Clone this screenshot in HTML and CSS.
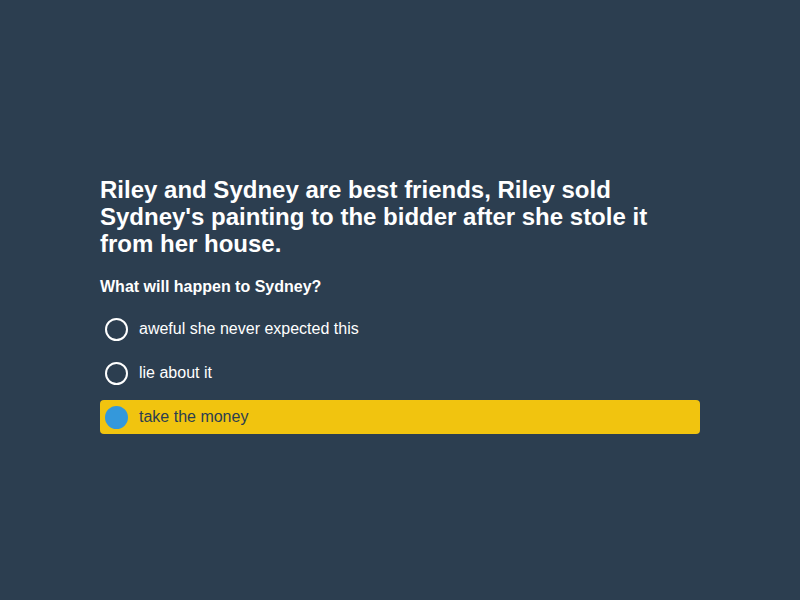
FILE: index.html
```html
<!DOCTYPE html>
<html lang="en">
<head>
<meta charset="utf-8">
<title>Quiz</title>
<link rel="stylesheet" href="styles.css">
</head>
<body>
<main class="page">
  <section class="quiz">
    <h1 class="question">Riley and Sydney are best friends, Riley sold Sydney's painting to the bidder after she stole it from her house.</h1>
    <h2 class="prompt">What will happen to Sydney?</h2>
    <ul class="options">
      <li class="option"><span class="radio"></span><span class="label">aweful she never expected this</span></li>
      <li class="option"><span class="radio"></span><span class="label">lie about it</span></li>
      <li class="option selected"><span class="radio"></span><span class="label">take the money</span></li>
    </ul>
  </section>
</main>
</body>
</html>
```
FILE: styles.css
```css
html, body {
  margin: 0;
  padding: 0;
  height: 100%;
}
body {
  background: #2c3e50;
  color: #ffffff;
  font-family: "Liberation Sans", Arial, sans-serif;
}
.page {
  height: 100%;
  box-sizing: border-box;
  padding-top: 8px;
  display: flex;
  align-items: center;
  justify-content: center;
}
.quiz {
  width: 600px;
}
.question {
  margin: 2px 0 21px;
  font-size: 24px;
  line-height: 27px;
  font-weight: bold;
}
.prompt {
  margin: 0 0 16px;
  font-size: 16px;
  line-height: 18px;
  font-weight: bold;
}
.options {
  list-style: none;
  margin: 0;
  padding: 0;
  display: flex;
  flex-direction: column;
  gap: 10px;
}
.option {
  height: 34px;
  display: flex;
  align-items: center;
  padding-left: 5px;
  border-radius: 4px;
  font-size: 16px;
}
.radio {
  width: 23px;
  height: 23px;
  box-sizing: border-box;
  border: 2px solid #ffffff;
  border-radius: 50%;
  margin-right: 11px;
  flex: none;
}
.option.selected {
  background: #f1c40f;
  color: #2c3e50;
}
.option.selected .radio {
  background: #3498db;
  border-color: #3498db;
}
```
